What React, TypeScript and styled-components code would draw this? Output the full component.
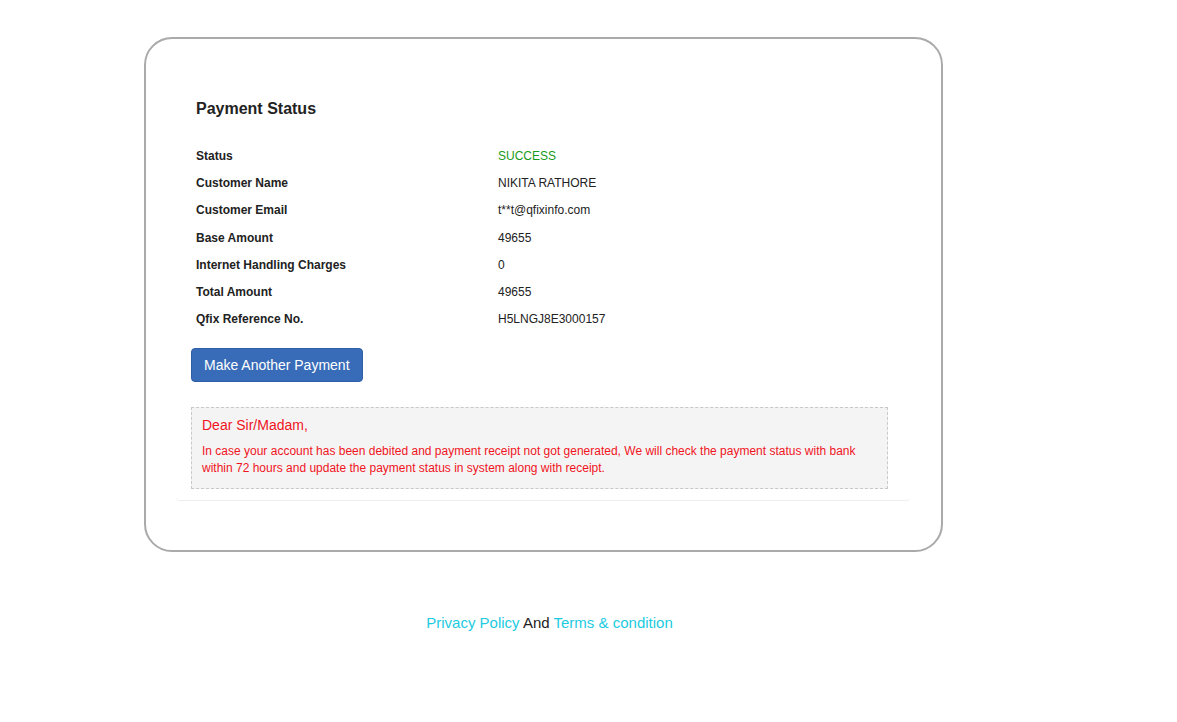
import React from 'react';
import styled, { createGlobalStyle } from 'styled-components';

const GlobalStyle = createGlobalStyle`
  body {
    margin: 0;
    background: #fff;
    font-family: "Liberation Sans", Arial, sans-serif;
    color: #333;
  }
`;

const Page = styled.div`
  padding-top: 37px;
`;

const Card = styled.div`
  width: 799px;
  margin-left: 144px;
  box-sizing: border-box;
  border: 2px solid #aaa;
  border-radius: 28px;
  padding: 61px 31px 49px 30px;
`;

const Panel = styled.div`
  padding: 0 15px 11px 15px;
  border-bottom: 1px solid #eee;
  border-radius: 0 0 4px 4px;
`;

const Heading = styled.h3`
  margin: 0 0 25px 5px;
  font-size: 16px;
  line-height: 18px;
  font-weight: bold;
  color: #222;
`;

const Table = styled.div`
  display: grid;
  grid-template-columns: 302px 1fr;
  padding-left: 5px;
`;

const Label = styled.div`
  font-size: 12px;
  font-weight: bold;
  line-height: 27.17px;
  color: #222;
`;

const Value = styled.div<{ $tone?: string }>`
  font-size: 12px;
  line-height: 27.17px;
  color: ${p => p.$tone || '#222'};
`;

const Button = styled.button`
  margin-top: 15px;
  height: 34px;
  padding: 6px 12px;
  font-family: inherit;
  font-size: 14px;
  color: #fff;
  background: #396cb8;
  border: 1px solid #2f5fa6;
  border-radius: 4px;
  cursor: pointer;
`;

const Notice = styled.div`
  margin-top: 25px;
  width: 697px;
  box-sizing: border-box;
  background: #f4f4f4;
  border: 1px dashed #c8c8c8;
  padding: 7px 10px 11px 10px;
  color: #f0141e;
`;

const NoticeTitle = styled.div`
  font-size: 14px;
  line-height: 20px;
`;

const NoticeText = styled.p`
  margin: 8px 0 0;
  font-size: 12px;
  line-height: 17px;
`;

const Footer = styled.div`
  width: 1099px;
  margin-top: 61px;
  text-align: center;
  font-size: 15px;
  line-height: 20px;
  color: #222;
`;

const FooterLink = styled.a`
  color: #1ccbdf;
  text-decoration: none;
`;

const rows: [string, string, string?][] = [
  ['Status', 'SUCCESS', '#1a9a1a'],
  ['Customer Name', 'NIKITA RATHORE'],
  ['Customer Email', 't**t@qfixinfo.com'],
  ['Base Amount', '49655'],
  ['Internet Handling Charges', '0'],
  ['Total Amount', '49655'],
  ['Qfix Reference No.', 'H5LNGJ8E3000157'],
];

export default function App() {
  return (
    <>
      <GlobalStyle />
      <Page>
        <Card>
          <Panel>
            <Heading>Payment Status</Heading>
            <Table>
              {rows.map(([l, v, c]) => (
                <React.Fragment key={l}>
                  <Label>{l}</Label>
                  <Value $tone={c}>{v}</Value>
                </React.Fragment>
              ))}
            </Table>
            <Button>Make Another Payment</Button>
            <Notice>
              <NoticeTitle>Dear Sir/Madam,</NoticeTitle>
              <NoticeText>
                In case your account has been debited and payment receipt not got generated, We will check the payment status with bank within 72 hours and update the payment status in system along with receipt.
              </NoticeText>
            </Notice>
          </Panel>
        </Card>
        <Footer>
          <FooterLink href="#">Privacy Policy</FooterLink> And{' '}
          <FooterLink href="#">Terms &amp; condition</FooterLink>
        </Footer>
      </Page>
    </>
  );
}
